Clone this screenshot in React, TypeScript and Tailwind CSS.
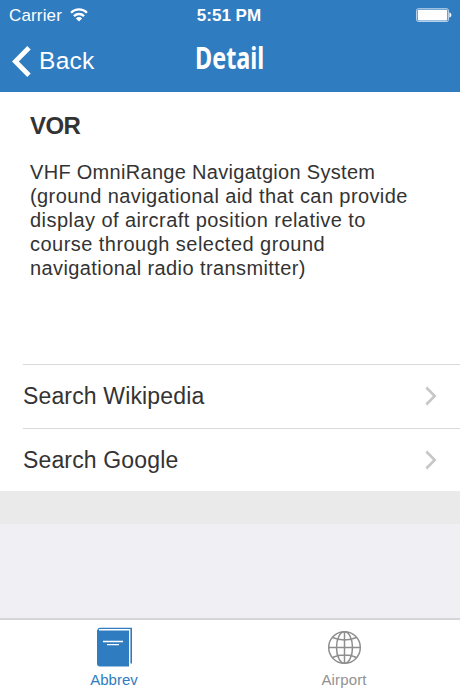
const description = [
  { text: "VHF OmniRange Navigatgion System", tracking: "tracking-[0.3px]" },
  { text: "(ground navigational aid that can provide", tracking: "tracking-[0.4px]" },
  { text: "display of aircraft position relative to", tracking: "tracking-[0.45px]" },
  { text: "course through selected ground", tracking: "tracking-[0.46px]" },
  { text: "navigational radio transmitter)", tracking: "tracking-[0.4px]" },
];

const links = ["Search Wikipedia", "Search Google"];

function StatusBar() {
  return (
    <div className="grid h-[30px] grid-cols-3 items-center pl-[9px] pr-2 text-[17px] leading-5">
      <div className="flex items-center pt-px">
        <span className="tracking-[0.15px]">Carrier</span>
        <svg width="18" height="14" viewBox="0 0 18 14" className="ml-2 -mt-0.5" fill="none" stroke="white" strokeWidth="2.3">
          <path d="M1 4.7a11.4 11.4 0 0 1 16 0" />
          <path d="M3.9 8.1a7.2 7.2 0 0 1 10.2 0" />
          <path d="M9 13.6 5.9 10.4a4.4 4.4 0 0 1 6.2 0z" fill="white" stroke="none" />
        </svg>
      </div>

      <span className="-ml-[3px] pt-px text-center font-bold">5:51 PM</span>

      <svg width="36" height="15" viewBox="0 0 36 15" className="justify-self-end">
        <rect x="0.5" y="0.7" width="32" height="12.8" rx="1.8" fill="none" stroke="white" strokeOpacity="0.65" />
        <rect x="1.7" y="1.8" width="29.6" height="10.6" rx="0.8" fill="white" />
        <path d="M33.4 4.6c2.6.6 2.6 4.4 0 5z" fill="white" />
      </svg>
    </div>
  );
}

function Header() {
  return (
    <header className="h-[92px] shrink-0 bg-[#307cc0] text-white">
      <StatusBar />

      <div className="grid h-[62px] grid-cols-3 items-center">
        <button className="flex items-center pl-3 text-left">
          <svg width="19" height="31" viewBox="0 0 19 31" fill="none" stroke="white" strokeWidth="4.8">
            <path d="M17 1.8 3.4 15.5 17 29.2" />
          </svg>
          <span className="ml-2 text-[24.5px] leading-[30px] tracking-[0.3px]">Back</span>
        </button>

        <h1 className="-mt-1.5 origin-center scale-x-[0.78] text-center font-['Noto_Sans',sans-serif] text-[30px] font-bold leading-9">
          Detail
        </h1>
      </div>
    </header>
  );
}

function Chevron() {
  return (
    <svg width="12" height="20" viewBox="0 0 12 20" fill="none" stroke="#c7c7c9" strokeWidth="2.6">
      <path d="m1.3 1.5 8.4 8.5-8.4 8.5" />
    </svg>
  );
}

function TabBar() {
  return (
    <nav className="grid h-[72px] shrink-0 grid-cols-2 border-t-2 border-[#d5d5d5] bg-white text-[15px] leading-5">
      <button className="flex flex-col items-center pt-[7px] text-[#307cc0]">
        <svg width="36" height="40" viewBox="0 0 36 40">
          <path d="M2.5.8H35V36.5H32V4H4L1 2.5z" fill="#307cc0" />
          <path d="M0 3.5 1.5 1l2 2H32V39.4H3a3 3 0 0 1-3-3z" fill="#307cc0" />
          <path d="M2 2.7h30.7V37" fill="none" stroke="white" strokeWidth="1.4" />
          <path d="M6 14.5h20M10 17.6h12" stroke="white" strokeWidth="1.4" />
        </svg>
        <span className="-ml-0.5 mt-[3px]">Abbrev</span>
      </button>

      <button className="-ml-px flex flex-col items-center pt-[7px] text-[#929292]">
        <svg width="36" height="40" viewBox="0 0 36 40" fill="none" stroke="#8e8e8e" strokeWidth="1.5">
          <circle cx="17.5" cy="20.5" r="15.8" />
          <ellipse cx="17.5" cy="20.5" rx="8" ry="15.8" />
          <path d="M17.5 4.7v31.6M1.7 20.5h31.6M5.5 10.5c7 3.2 17 3.2 24 0M5.5 30.5c7-3.2 17-3.2 24 0" />
        </svg>
        <span className="-ml-px mt-[3px] tracking-[0.15px]">Airport</span>
      </button>
    </nav>
  );
}

export default function App() {
  return (
    <div className="flex h-[690px] w-[460px] flex-col overflow-hidden bg-[#efeff4] font-['Liberation_Sans',Arial,sans-serif] text-[#333333]">
      <Header />

      <main className="flex-1">
        <section className="h-[272px] bg-white pl-[30px] pt-[19px]">
          <h2 className="text-[24px] font-bold leading-[30px] tracking-[-0.6px]">VOR</h2>
          <div className="mt-[19px] whitespace-nowrap text-[20px] leading-[24px]">
            {description.map((line) => (
              <p key={line.text} className={line.tracking}>
                {line.text}
              </p>
            ))}
          </div>
        </section>

        <ul className="bg-white pl-[23px]">
          {links.map((link) => (
            <li
              key={link}
              className="flex h-[63.5px] items-center justify-between border-t border-[#d9d9db] pr-[23px] text-[23px] leading-[30px] tracking-[0.15px]"
            >
              <span>{link}</span>
              <Chevron />
            </li>
          ))}
        </ul>

        <div className="h-[33px] bg-[#eaeaea]" />
      </main>

      <TabBar />
    </div>
  );
}
